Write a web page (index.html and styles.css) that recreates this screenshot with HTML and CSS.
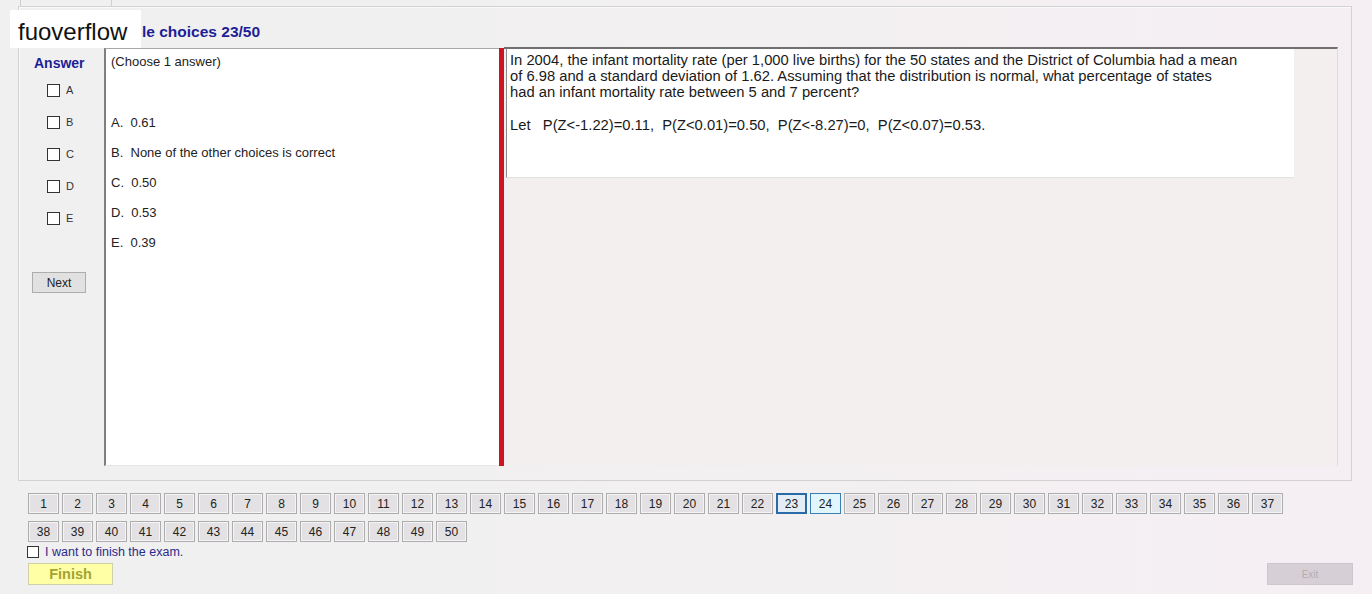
FILE: index.html
```html
<!DOCTYPE html>
<html>
<head>
<meta charset="utf-8">
<link rel="stylesheet" href="styles.css">
</head>
<body>
<div class="logo">fuoverflow</div>
<div class="tab"></div>
<div class="panel">
  <div class="title">le choices 23/50</div>
  <div class="content">
    <div class="answers">
      <div class="answer-head">Answer</div>
      <div class="opt"><span class="box"></span><span>A</span></div>
      <div class="opt"><span class="box"></span><span>B</span></div>
      <div class="opt"><span class="box"></span><span>C</span></div>
      <div class="opt"><span class="box"></span><span>D</span></div>
      <div class="opt"><span class="box"></span><span>E</span></div>
      <button class="next">Next</button>
    </div>
    <div class="choices">
      <div class="choose">(Choose 1 answer)</div>
      <ul class="choice-list">
        <li>A.&nbsp; 0.61</li>
        <li>B.&nbsp; None of the other choices is correct</li>
        <li>C.&nbsp; 0.50</li>
        <li>D.&nbsp; 0.53</li>
        <li>E.&nbsp; 0.39</li>
      </ul>
    </div>
    <div class="splitter"></div>
    <div class="qarea">
      <div class="qbox">
        <p class="qtext">In 2004, the infant mortality rate (per 1,000 live births) for the 50 states and the District of Columbia had a mean<br>of 6.98 and a standard deviation of 1.62. Assuming that the distribution is normal, what percentage of states<br>had an infant mortality rate between 5 and 7 percent?</p>
        <p class="qlet">Let&nbsp;&nbsp; P(Z&lt;-1.22)=0.11,&nbsp; P(Z&lt;0.01)=0.50,&nbsp; P(Z&lt;-8.27)=0,&nbsp; P(Z&lt;0.07)=0.53.</p>
      </div>
    </div>
  </div>
</div>
<div class="nav">
  <button class="num">1</button><button class="num">2</button><button class="num">3</button><button class="num">4</button><button class="num">5</button><button class="num">6</button><button class="num">7</button><button class="num">8</button><button class="num">9</button><button class="num">10</button>
  <button class="num">11</button><button class="num">12</button><button class="num">13</button><button class="num">14</button><button class="num">15</button><button class="num">16</button><button class="num">17</button><button class="num">18</button><button class="num">19</button><button class="num">20</button>
  <button class="num">21</button><button class="num">22</button><button class="num current">23</button><button class="num hover">24</button><button class="num">25</button><button class="num">26</button><button class="num">27</button><button class="num">28</button><button class="num">29</button><button class="num">30</button>
  <button class="num">31</button><button class="num">32</button><button class="num">33</button><button class="num">34</button><button class="num">35</button><button class="num">36</button><button class="num">37</button><button class="num">38</button><button class="num">39</button><button class="num">40</button>
  <button class="num">41</button><button class="num">42</button><button class="num">43</button><button class="num">44</button><button class="num">45</button><button class="num">46</button><button class="num">47</button><button class="num">48</button><button class="num">49</button><button class="num">50</button>
</div>
<div class="finish-check"><span class="box"></span><span>I want to finish the exam.</span></div>
<div class="actions">
  <button class="finish">Finish</button>
  <button class="exit">Exit</button>
</div>
</body>
</html>
```
FILE: styles.css
```css
html, body {
  margin: 0;
  padding: 0;
}
body {
  width: 1372px;
  height: 594px;
  overflow: hidden;
  position: relative;
  background: linear-gradient(to right, #f0f0f0 0%, #f2f0f1 50%, #f5eff3 100%);
  font-family: "Liberation Sans", Arial, sans-serif;
  color: #1a1a1a;
}
.logo {
  position: absolute;
  left: 10px;
  top: 10px;
  width: 131px;
  height: 38px;
  background: #fff;
  font-size: 24px;
  line-height: 44px;
  padding-left: 8px;
  box-sizing: border-box;
  color: #111;
  z-index: 5;
}
.tab {
  margin-left: 20px;
  width: 90px;
  height: 6px;
  border-left: 1px solid #cfcfcf;
  border-right: 1px solid #cfcfcf;
}
.panel {
  margin-left: 18px;
  width: 1334px;
  height: 475px;
  box-sizing: border-box;
  border: 1px solid #d2d2d2;
  box-shadow: inset 1px 1px 0 #fafafa;
}
.title {
  height: 40px;
  padding-left: 123px;
  line-height: 50px;
  font-size: 15.5px;
  font-weight: bold;
  color: #1e1e96;
}
.content {
  display: flex;
  height: 419px;
}
.answers {
  width: 85px;
  display: flex;
  flex-direction: column;
}
.answer-head {
  padding-top: 8px;
  height: 16px;
  line-height: 16px;
  font-size: 14px;
  font-weight: bold;
  color: #1e1e96;
  padding-left: 15px;
}
.opt {
  display: flex;
  align-items: center;
  height: 18px;
  margin-top: 14px;
  padding-left: 28px;
  font-size: 11px;
  color: #333;
}
.answer-head + .opt {
  margin-top: 10px;
}
.box {
  display: inline-block;
  width: 11px;
  height: 11px;
  border: 1px solid #333;
  background: #fff;
  margin-right: 6px;
}
.next {
  margin-top: 45px;
  margin-left: 13px;
  width: 54px;
  height: 21px;
  border: 1px solid #adadad;
  background: #e1e1e1;
  font-family: "Liberation Sans", Arial, sans-serif;
  font-size: 12px;
  color: #222;
  padding: 0;
}
.choices {
  width: 395px;
  box-sizing: border-box;
  background: #fff;
  border-left: 2px solid #7f7f7f;
  border-top: 1px solid #a8a8a8;
  border-bottom: 1px solid #e6e6e6;
  margin-top: 1px;
  padding-left: 5px;
  font-size: 13px;
  color: #222;
}
.choose {
  padding-top: 5px;
  line-height: 16px;
}
.choice-list {
  list-style: none;
  margin: 38px 0 0;
  padding: 0;
}
.choice-list li {
  height: 30px;
  line-height: 30px;
}
.splitter {
  width: 5px;
  background: #cc1522;
  margin-top: 1px;
}
.qarea {
  width: 834px;
  box-sizing: border-box;
  border-top: 2px solid #707070;
  border-right: 1px solid #dcdcdc;
  background: #f3efef;
  padding-left: 2px;
}
.qbox {
  width: 788px;
  height: 129px;
  box-sizing: border-box;
  background: #fff;
  border-left: 1px solid #8c8c8c;
  border-bottom: 1px solid #e2e2e2;
  padding: 3px 0 0 3px;
  font-size: 14.75px;
  color: #1a1a1a;
}
.qtext {
  margin: 0;
  line-height: 16px;
}
.qlet {
  margin: 17px 0 0;
  line-height: 16px;
}
.nav {
  margin: 12px 0 0 28px;
  width: 1260px;
  display: flex;
  flex-wrap: wrap;
  column-gap: 3px;
  row-gap: 7px;
}
.num {
  width: 31px;
  height: 21px;
  padding: 0;
  box-sizing: border-box;
  border: 1px solid #adadad;
  box-shadow: inset 0 0 0 1px #f4f4f4;
  background: #e3e1e3;
  font-family: "Liberation Sans", Arial, sans-serif;
  font-size: 12px;
  color: #222;
}
.num.current {
  border: 2px solid #2a6aa6;
  box-shadow: none;
  background: #e2edf5;
}
.num.hover {
  border: 1px solid #3b7fb5;
  box-shadow: none;
  background: #e0f5fc;
}
.finish-check {
  display: flex;
  align-items: center;
  margin: 2px 0 0 27px;
  height: 16px;
  font-size: 12.5px;
  color: #2b2b8a;
}
.finish-check .box {
  width: 10px;
  height: 10px;
  margin-right: 6px;
}
.actions {
  display: flex;
  justify-content: space-between;
  margin: 3px 19px 0 28px;
}
.finish {
  width: 85px;
  height: 22px;
  padding: 0;
  border: 1px solid #cfcfa8;
  background: #ffffa6;
  font-family: "Liberation Sans", Arial, sans-serif;
  font-size: 14.5px;
  font-weight: bold;
  color: #a3a330;
}
.exit {
  width: 86px;
  height: 22px;
  padding: 0;
  border: 1px solid #cdc6cd;
  background: #d6d0d6;
  font-family: "Liberation Sans", Arial, sans-serif;
  font-size: 10px;
  color: #b3adb3;
}
```
